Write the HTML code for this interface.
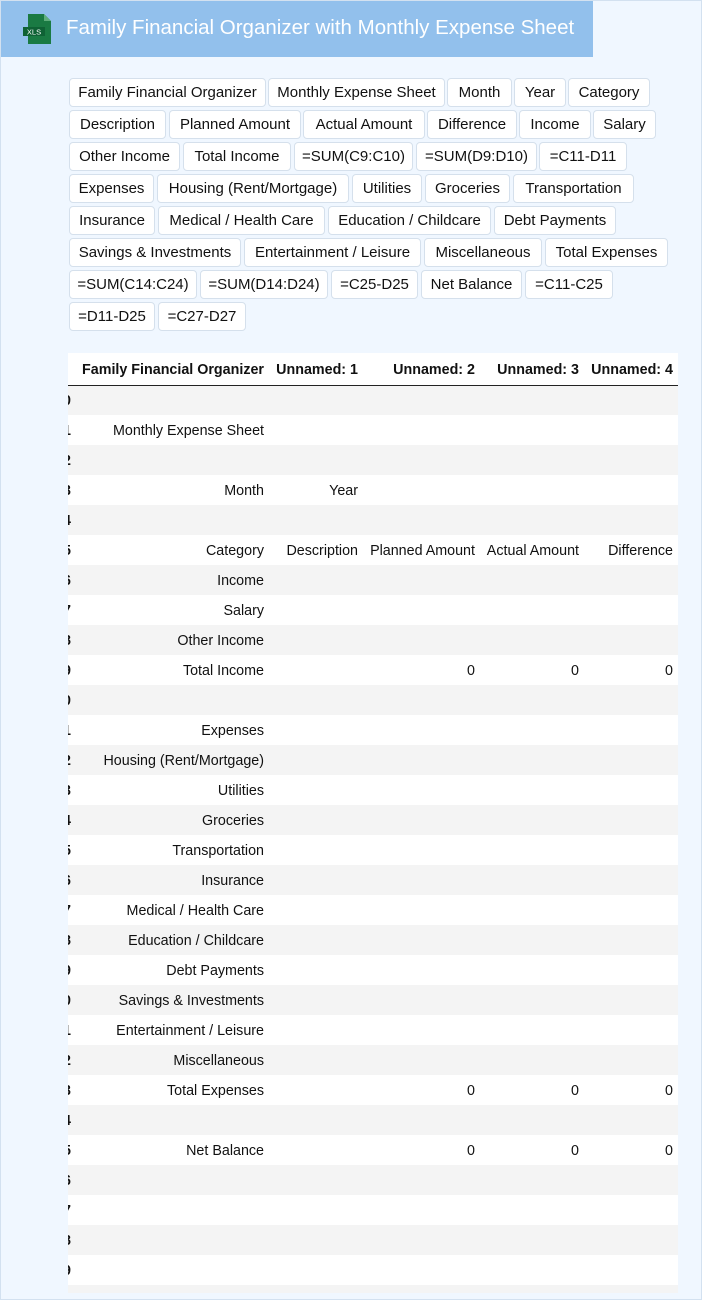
<!DOCTYPE html>
<html><head><meta charset="utf-8"><style>
*{box-sizing:border-box;margin:0;padding:0}
body{width:702px;height:1292px;overflow:hidden;background:#f0f7ff;font-family:"Liberation Sans",Arial,sans-serif;position:relative}
.bd{position:absolute;left:0;top:0;width:702px;height:1300px;border:1px solid #d3e1f0}
.hdr{position:absolute;left:1px;top:1px;width:592px;height:56px;background:#92c0ec}
.hdr h1{position:absolute;left:65px;top:15px;font-size:20.5px;font-weight:normal;color:#fff;white-space:nowrap}
.c{position:absolute;height:29px;background:#fff;border:1px solid #d5e0ec;border-radius:4px;font-size:15px;line-height:28px;text-align:center;color:#111;white-space:nowrap}
.tw{position:absolute;left:68px;top:353px;width:610px;height:940px;overflow:hidden}
table{position:absolute;left:-16px;top:0;width:627px;border-collapse:collapse;table-layout:fixed;font-size:14.3px;color:#111}
td,th{height:30px;text-align:right;padding-right:6px;padding-top:2px;white-space:nowrap;overflow:hidden}
th{height:32px;font-weight:bold;border-bottom:1px solid #222;background:#fff}
td.i{font-weight:bold;padding-right:4px}
tr:nth-child(odd) td{background:#f4f4f4}
tr:nth-child(even) td{background:#fff}
</style></head><body>
<div class="bd"></div>
<div class="hdr">
<svg style="position:absolute;left:20px;top:11px" width="32" height="34" viewBox="0 0 32 34"><path d="M7 2h16l7 7v23H7z" fill="#1a7a43"/><path d="M23 2v7h7z" fill="#5fae7c"/><rect x="2" y="15" width="22" height="9" fill="#0f6235"/><text x="13" y="22.5" font-size="7.5" fill="#fff" text-anchor="middle" font-family="Liberation Sans">XLS</text></svg>
<h1>Family Financial Organizer with Monthly Expense Sheet</h1></div>

<div class="c" style="left:69px;top:78px;width:197px">Family Financial Organizer</div>
<div class="c" style="left:268px;top:78px;width:177px">Monthly Expense Sheet</div>
<div class="c" style="left:447px;top:78px;width:65px">Month</div>
<div class="c" style="left:514px;top:78px;width:52px">Year</div>
<div class="c" style="left:568px;top:78px;width:82px">Category</div>

<div class="c" style="left:69px;top:110px;width:97px">Description</div>
<div class="c" style="left:169px;top:110px;width:132px">Planned Amount</div>
<div class="c" style="left:303px;top:110px;width:122px">Actual Amount</div>
<div class="c" style="left:427px;top:110px;width:90px">Difference</div>
<div class="c" style="left:519px;top:110px;width:72px">Income</div>
<div class="c" style="left:593px;top:110px;width:63px">Salary</div>

<div class="c" style="left:69px;top:142px;width:111px">Other Income</div>
<div class="c" style="left:183px;top:142px;width:108px">Total Income</div>
<div class="c" style="left:294px;top:142px;width:119px">=SUM(C9:C10)</div>
<div class="c" style="left:416px;top:142px;width:121px">=SUM(D9:D10)</div>
<div class="c" style="left:539px;top:142px;width:88px">=C11-D11</div>

<div class="c" style="left:69px;top:174px;width:85px">Expenses</div>
<div class="c" style="left:157px;top:174px;width:192px">Housing (Rent/Mortgage)</div>
<div class="c" style="left:352px;top:174px;width:70px">Utilities</div>
<div class="c" style="left:425px;top:174px;width:85px">Groceries</div>
<div class="c" style="left:513px;top:174px;width:121px">Transportation</div>

<div class="c" style="left:69px;top:206px;width:86px">Insurance</div>
<div class="c" style="left:158px;top:206px;width:167px">Medical / Health Care</div>
<div class="c" style="left:328px;top:206px;width:163px">Education / Childcare</div>
<div class="c" style="left:494px;top:206px;width:122px">Debt Payments</div>

<div class="c" style="left:69px;top:238px;width:172px">Savings &amp; Investments</div>
<div class="c" style="left:244px;top:238px;width:177px">Entertainment / Leisure</div>
<div class="c" style="left:424px;top:238px;width:118px">Miscellaneous</div>
<div class="c" style="left:545px;top:238px;width:123px">Total Expenses</div>

<div class="c" style="left:69px;top:270px;width:128px">=SUM(C14:C24)</div>
<div class="c" style="left:200px;top:270px;width:128px">=SUM(D14:D24)</div>
<div class="c" style="left:331px;top:270px;width:87px">=C25-D25</div>
<div class="c" style="left:421px;top:270px;width:101px">Net Balance</div>
<div class="c" style="left:525px;top:270px;width:88px">=C11-C25</div>

<div class="c" style="left:69px;top:302px;width:86px">=D11-D25</div>
<div class="c" style="left:158px;top:302px;width:88px">=C27-D27</div>

<div class="tw"><table>
<colgroup><col style="width:23px"><col style="width:195px"><col style="width:94px"><col style="width:117px"><col style="width:104px"><col style="width:94px"></colgroup>
<thead><tr><th></th><th>Family Financial Organizer</th><th>Unnamed: 1</th><th>Unnamed: 2</th><th>Unnamed: 3</th><th>Unnamed: 4</th></tr></thead>
<tbody>
<tr><td class="i">0</td><td></td><td></td><td></td><td></td><td></td></tr>
<tr><td class="i">1</td><td>Monthly Expense Sheet</td><td></td><td></td><td></td><td></td></tr>
<tr><td class="i">2</td><td></td><td></td><td></td><td></td><td></td></tr>
<tr><td class="i">3</td><td>Month</td><td>Year</td><td></td><td></td><td></td></tr>
<tr><td class="i">4</td><td></td><td></td><td></td><td></td><td></td></tr>
<tr><td class="i">5</td><td>Category</td><td>Description</td><td>Planned Amount</td><td>Actual Amount</td><td>Difference</td></tr>
<tr><td class="i">6</td><td>Income</td><td></td><td></td><td></td><td></td></tr>
<tr><td class="i">7</td><td>Salary</td><td></td><td></td><td></td><td></td></tr>
<tr><td class="i">8</td><td>Other Income</td><td></td><td></td><td></td><td></td></tr>
<tr><td class="i">9</td><td>Total Income</td><td></td><td>0</td><td>0</td><td>0</td></tr>
<tr><td class="i">10</td><td></td><td></td><td></td><td></td><td></td></tr>
<tr><td class="i">11</td><td>Expenses</td><td></td><td></td><td></td><td></td></tr>
<tr><td class="i">12</td><td>Housing (Rent/Mortgage)</td><td></td><td></td><td></td><td></td></tr>
<tr><td class="i">13</td><td>Utilities</td><td></td><td></td><td></td><td></td></tr>
<tr><td class="i">14</td><td>Groceries</td><td></td><td></td><td></td><td></td></tr>
<tr><td class="i">15</td><td>Transportation</td><td></td><td></td><td></td><td></td></tr>
<tr><td class="i">16</td><td>Insurance</td><td></td><td></td><td></td><td></td></tr>
<tr><td class="i">17</td><td>Medical / Health Care</td><td></td><td></td><td></td><td></td></tr>
<tr><td class="i">18</td><td>Education / Childcare</td><td></td><td></td><td></td><td></td></tr>
<tr><td class="i">19</td><td>Debt Payments</td><td></td><td></td><td></td><td></td></tr>
<tr><td class="i">20</td><td>Savings &amp; Investments</td><td></td><td></td><td></td><td></td></tr>
<tr><td class="i">21</td><td>Entertainment / Leisure</td><td></td><td></td><td></td><td></td></tr>
<tr><td class="i">22</td><td>Miscellaneous</td><td></td><td></td><td></td><td></td></tr>
<tr><td class="i">23</td><td>Total Expenses</td><td></td><td>0</td><td>0</td><td>0</td></tr>
<tr><td class="i">24</td><td></td><td></td><td></td><td></td><td></td></tr>
<tr><td class="i">25</td><td>Net Balance</td><td></td><td>0</td><td>0</td><td>0</td></tr>
<tr><td class="i">26</td><td></td><td></td><td></td><td></td><td></td></tr>
<tr><td class="i">27</td><td></td><td></td><td></td><td></td><td></td></tr>
<tr><td class="i">28</td><td></td><td></td><td></td><td></td><td></td></tr>
<tr><td class="i">29</td><td></td><td></td><td></td><td></td><td></td></tr>
<tr><td class="i">30</td><td></td><td></td><td></td><td></td><td></td></tr>
</tbody></table></div>
</body></html>
